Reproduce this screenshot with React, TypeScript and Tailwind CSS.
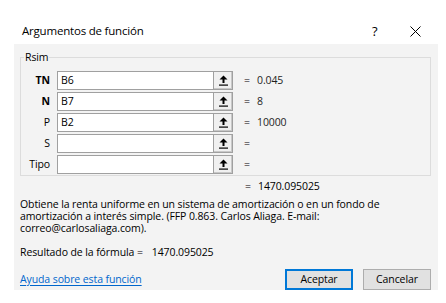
import React from "react";

const rows = [
  { label: "TN", bold: true, value: "B6", result: "0.045" },
  { label: "N", bold: true, value: "B7", result: "8" },
  { label: "P", bold: false, value: "B2", result: "10000" },
  { label: "S", bold: false, value: "", result: "" },
  { label: "Tipo", bold: false, value: "", result: "" },
];

const RefIcon = () => (
  <svg width="9" height="11" viewBox="0 0 9 11">
    <path d="M4.5 0.5 L8.5 4.5 L5.5 4.5 L5.5 8 L3.5 8 L3.5 4.5 L0.5 4.5 Z" fill="#000" />
    <rect x="0" y="9.5" width="9" height="1.2" fill="#000" />
  </svg>
);

export default function App() {
  return (
    <div
      className="w-[446px] h-[303px] bg-white text-[10.5px] tracking-[-0.1px] text-black overflow-hidden"
      style={{ fontFamily: '"Open Sans", "Noto Sans", sans-serif' }}
    >
      {/* Title bar */}
      <div className="h-[44px] flex items-center pl-[22px] pt-[18px] relative">
        <span className="text-[11.5px] tracking-[-0.2px] text-[#000]">Argumentos de función</span>
        <span className="absolute left-[372px] top-[22px] text-[13px]">?</span>
        <svg className="absolute left-[410px] top-[26px]" width="11" height="11" viewBox="0 0 11 11">
          <path d="M0.5 0.5 L10.5 10.5 M10.5 0.5 L0.5 10.5" stroke="#000" strokeWidth="1" />
        </svg>
      </div>

      {/* Body */}
      <div className="ml-[14px] w-[424px] h-[246px] bg-[#f3f3f3] flex flex-col pl-[6px] pr-[7px] pt-[13px]">
        <div className="relative h-[120px] border border-[#dcdcdc] pt-[13px]">
          <span className="absolute left-[3px] -top-[9px] bg-[#f3f3f3] px-[1px] leading-[16px]">Rsim</span>
          <div className="flex flex-col gap-[2px]">
            {rows.map((r) => (
              <div key={r.label} className="flex items-center h-[19px]">
                <span className={`w-[29px] text-right ${r.bold ? "font-bold" : ""}`}>{r.label}</span>
                <div className="ml-[7px] w-[157px] h-[19px] bg-white border border-[#a0a0a0] flex items-center pl-[3px]">
                  {r.value}
                </div>
                <div className="w-[19px] h-[19px] bg-[#f0f0f0] border-t border-r border-b border-[#a0a0a0] flex items-center justify-center shadow-[inset_-1px_-1px_0_#c8c8c8]">
                  <RefIcon />
                </div>
                <span className="ml-[11px] w-[13px]">=</span>
                <span className="text-[#1f1f1f]">{r.result}</span>
              </div>
            ))}
          </div>
        </div>

        <div className="flex h-[20px] items-center mt-[1px]">
          <span className="ml-[225px] w-[13px]">=</span>
          <span>1470.095025</span>
        </div>

        <p className="leading-[12px] w-[400px] mt-[1px]">
          Obtiene la renta uniforme en un sistema de amortización o en un fondo de amortización a interés simple. (FFP 0.863. Carlos Aliaga. E-mail: correo@carlosaliaga.com).
        </p>

        <div className="flex items-center mt-[11px] h-[16px]">
          <span>Resultado de la fórmula =</span>
          <span className="ml-[9px]">1470.095025</span>
        </div>

        <div className="flex items-center mt-[8px]">
          <a className="text-[#0066cc] underline underline-offset-2">Ayuda sobre esta función</a>
          <div className="ml-auto flex gap-[10px]">
            <button className="w-[68px] h-[21px] bg-[#e1e1e1] border-2 border-[#0078d7] flex items-center justify-center">
              Aceptar
            </button>
            <button className="w-[68px] h-[21px] bg-[#e1e1e1] border border-[#adadad] flex items-center justify-center">
              Cancelar
            </button>
          </div>
        </div>
      </div>
    </div>
  );
}
